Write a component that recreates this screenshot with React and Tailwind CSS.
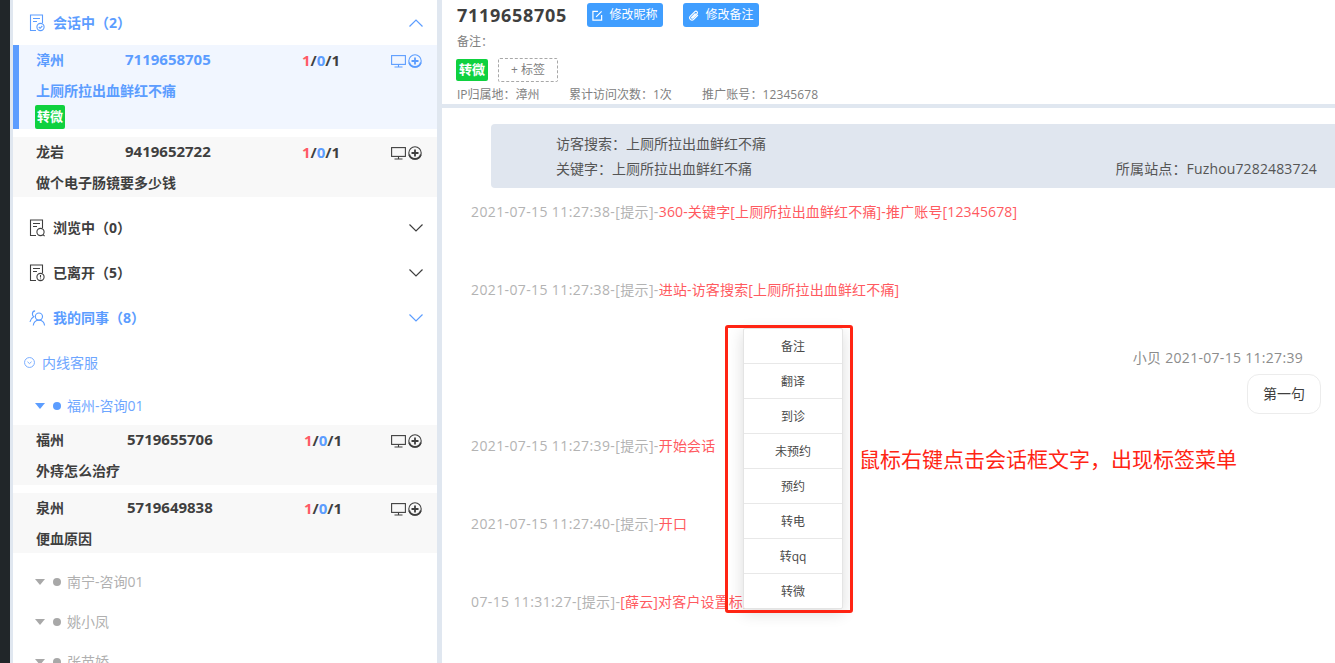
import React from "react";

const FONT = "font-['Open_Sans','Noto_Sans_CJK_SC',sans-serif]";

// document outline with a small badge in the corner
const DocIcon = ({ badge, className }) => (
  <svg viewBox="0 0 16 18" fill="none" stroke="currentColor" strokeWidth="1.1" className={`w-4 h-[18px] shrink-0 ${className}`}>
    <path d="M7 16.5H1.5V1h12v8" />
    <path d="M4 4.5h7M4 7.5h4" />
    <circle cx="11.5" cy="13" r="3.6" />
    {badge === "check" && <path d="M9.8 13l1.3 1.3 2.2-2.3" />}
    {badge === "search" && <path d="M14 15.6l1.6 1.6" />}
    {badge === "alert" && <path d="M11.5 11v2.6M11.5 14.4v.9" />}
  </svg>
);

const PeopleIcon = () => (
  <svg viewBox="0 0 18 18" fill="none" stroke="currentColor" strokeWidth="1.2" className="w-[17px] h-[18px] shrink-0">
    <circle cx="10.5" cy="7.5" r="3.8" />
    <path d="M4.5 17c.4-3.6 2.8-5.6 6-5.6s5.6 2 6 5.6" />
    <path d="M6.5 1.5C4.8 1.7 3.6 3 3.6 4.8c0 1.2.5 2.2 1.4 2.8C3 8.6 1.5 10.500 1 13" />
  </svg>
);

const Chevron = ({ up }) => (
  <svg viewBox="0 0 14 8" fill="none" stroke="currentColor" strokeWidth="1.2" className="w-[14px] h-[8px] shrink-0">
    <path d={up ? "M0.5 7.500L7 1l6.500 6.500" : "M0.500 0.500L7 7l6.500-6.500"} />
  </svg>
);

const ScreenIcon = () => (
  <svg viewBox="0 0 15 13" fill="none" stroke="currentColor" strokeWidth="1.1" className="w-[15px] h-[13px]">
    <rect x="0.6" y="0.6" width="13.8" height="8.8" />
    <path d="M7.500 9.500v2.500M3.500 12h8" />
  </svg>
);

const PlusCircleIcon = () => (
  <svg viewBox="0 0 14 14" fill="none" stroke="currentColor" className="w-[14px] h-[14px]">
    <circle cx="7" cy="7" r="6.2" strokeWidth="1.1" />
    <path d="M1.200 8.500A6 6 0 0012.800 8.500" strokeWidth="1.800" />
    <path d="M7 3.500v7M3.500 7h7" strokeWidth="1.800" />
  </svg>
);

const EditIcon = () => (
  <svg viewBox="0 0 12 12" fill="none" stroke="currentColor" strokeWidth="1.3" className="w-[11px] h-[11px]">
    <path d="M6.500 1.500H1v9.500h9.500V5.500" />
    <path d="M4.500 7.500L10.500 1.500" />
  </svg>
);

const ClipIcon = () => (
  <svg viewBox="0 0 12 12" fill="none" stroke="currentColor" strokeWidth="1.3" className="w-[11px] h-[11px]">
    <path d="M10.800 5.500l-4.600 4.700a2.500 2.500 0 01-3.600-3.600L7.500 1.800a1.600 1.600 0 012.300 2.300L5.200 8.700a.7.7 0 01-1-1l4-4" />
  </svg>
);

const SectionHeader = ({ icon, title, open, active }) => (
  <div className={`h-[45px] flex items-center pl-4 pr-[14px] ${active ? "text-[#5c9dff]" : "text-[#3f3f3f]"}`}>
    <span className="w-[24px] flex">{icon}</span>
    <span className="text-sm font-bold flex-1">{title}</span>
    <Chevron up={open} />
  </div>
);

const VisitorCard = ({ city, id, message, active, tag, wide }) => (
  <div
    className={`${active ? "bg-[#f1f6ff] text-[#5c9dff] border-l-[6px] border-[#5c9dff] pl-[17px]" : "bg-[#f8f8f8] text-[#3f3f3f] pl-[23px]"} pr-[15px] mb-2`}
  >
    <div className="flex items-center h-[30px] font-bold">
      <span className={`text-sm ${wide ? "w-[91px]" : "w-[89px]"}`}>{city}</span>
      <span className="w-[177px] -mt-[2px] text-[15px]">{id}</span>
      <span className="flex-1 text-[15px] text-[#3f3f3f]">
        <span className="text-[#ff5a66]">1</span>/<span className="text-[#5c9dff]">0</span>/1
      </span>
      <span className="flex items-center gap-[2px] mt-[2px]">
        <ScreenIcon />
        <PlusCircleIcon />
      </span>
    </div>
    <div className="h-[30px] pt-[2px] flex items-center text-sm font-bold">{message}</div>
    {tag && (
      <div className="-ml-[1px] h-[24px] flex">
        <span className="flex w-[30px] h-[24px] items-center justify-center bg-[#0fd13f] rounded-[2px] text-white text-[13px] font-bold">
          {tag}
        </span>
      </div>
    )}
  </div>
);

const GroupRow = ({ label, active }) => (
  <div className={`h-[40px] pt-[1px] flex items-center pl-[22px] text-sm ${active ? "text-[#6ea6ff]" : "text-[#b0b0b0]"}`}>
    <span className={`w-0 h-0 border-x-[5px] border-x-transparent border-t-[6px] ${active ? "border-t-[#5c9dff]" : "border-t-[#a8a8a8]"}`} />
    <span className={`w-2 h-2 rounded-full ml-2 mr-[6px] ${active ? "bg-[#5c9dff]" : "bg-[#a8a8a8]"}`} />
    {label}
  </div>
);

const Sidebar = () => (
  <aside className="w-[424px] shrink-0 bg-white overflow-hidden">
    <SectionHeader active open title="会话中（2）" icon={<DocIcon badge="check" />} />
    <VisitorCard active city="漳州" id="7119658705" message="上厕所拉出血鲜红不痛" tag="转微" />
    <VisitorCard city="龙岩" id="9419652722" message="做个电子肠镜要多少钱" />
    <SectionHeader title="浏览中（0）" icon={<DocIcon badge="search" />} />
    <SectionHeader title="已离开（5）" icon={<DocIcon badge="alert" />} />
    <SectionHeader active title="我的同事（8）" icon={<PeopleIcon />} />
    <div className="h-[45px] flex items-center pl-[11px] text-sm text-[#6ea6ff]">
      <svg viewBox="0 0 12 12" fill="none" stroke="currentColor" className="w-[11px] h-[11px] mr-[7px]">
        <circle cx="6" cy="6" r="5.400" />
        <path d="M3.800 5.200L6 7.200l2.200-2" />
      </svg>
      内线客服
    </div>
    <GroupRow active label="福州-咨询01" />
    <VisitorCard wide city="福州" id="5719655706" message="外痔怎么治疗" />
    <VisitorCard wide city="泉州" id="5719649838" message="便血原因" />
    <GroupRow label="南宁-咨询01" />
    <GroupRow label="姚小凤" />
    <GroupRow label="张苗娇" />
  </aside>
);

const ActionButton = ({ icon, label }) => (
  <button className="h-[24px] w-[76px] flex items-center justify-center gap-[6px] bg-[#409eff] rounded-[3px] text-white text-xs">
    {icon}
    {label}
  </button>
);

const LogLine = ({ time, text, className }) => (
  <div className={`h-[24px] leading-[24px] pl-[29px] text-sm whitespace-nowrap text-[#b3b3b3] ${className}`}>
    <span className="tracking-[0.38px]">{time}-[提示]-</span>
    <span className="tracking-[0.15px] text-[#ff5a5f]">{text}</span>
  </div>
);

const ContextMenu = () => (
  <div className="absolute left-[743px] top-[328px] w-[100px] bg-white border border-[#e4e4e4] rounded-[2px] shadow-[0_4px_16px_rgba(0,0,0,0.14)] divide-y divide-[#e8e8e8]">
    {["备注", "翻译", "到诊", "未预约", "预约", "转电", "转qq", "转微"].map((item) => (
      <div key={item} className="h-[35px] last:h-[34px] pt-[2px] flex items-center justify-center text-xs text-[#4a4a4a]">
        {item}
      </div>
    ))}
  </div>
);

export default function App() {
  return (
    <div className={`relative h-screen overflow-hidden flex bg-[#e0e7f0] ${FONT}`}>
      <div className="w-[10px] shrink-0 bg-[#212629]" />
      <div className="w-[3px] shrink-0" />
      <Sidebar />
      <main className="ml-[5px] flex-1 min-w-0 flex flex-col">
        <header className="h-[104px] bg-white pl-[15px] text-xs text-[#808080]">
          <div className="flex items-center h-[34px] pb-[4px]">
            <h1 className="w-[130px] text-lg font-bold tracking-[0.7px] text-[#3f3f3f]">7119658705</h1>
            <div className="flex gap-5">
              <ActionButton icon={<EditIcon />} label="修改昵称" />
              <ActionButton icon={<ClipIcon />} label="修改备注" />
            </div>
          </div>
          <div className="h-[16px] leading-[16px]">备注：</div>
          <div className="flex items-center gap-[10px] mt-[8px] h-[24px] -ml-[1px]">
            <span className="w-[32px] h-[22px] flex items-center justify-center bg-[#0fd13f] rounded-[2px] text-[13px] text-white font-bold">转微</span>
            <span className="w-[60px] h-[24px] flex items-center justify-center border border-dashed border-[#a8a8a8] rounded-[2px]">+ 标签</span>
          </div>
          <div className="flex mt-[4px] h-[18px] items-center">
            <span className="w-[112px]">IP归属地：漳州</span>
            <span className="w-[133px]">累计访问次数：1次</span>
            <span className="tracking-[0.1px]">推广账号：12345678</span>
          </div>
        </header>
        <div className="h-[4px]" />
        <section className="flex-1 bg-white pt-[16px] relative overflow-hidden">
          <div className="ml-[49px] h-[64px] bg-[#e0e6ef] rounded-l-[4px] pl-[65px] pr-[18px] pt-[8px] text-sm text-[#555]">
            <div className="h-[24px] leading-[24px]">访客搜索：上厕所拉出血鲜红不痛</div>
            <div className="h-[26px] leading-[26px] flex justify-between">
              <span>关键字：上厕所拉出血鲜红不痛</span>
              <span className="tracking-[0.15px]">所属站点：Fuzhou7282483724</span>
            </div>
          </div>
          <LogLine className="mt-[12px]" time="2021-07-15 11:27:38" text="360-关键字[上厕所拉出血鲜红不痛]-推广账号[12345678]" />
          <LogLine className="mt-[54px]" time="2021-07-15 11:27:38" text="进站-访客搜索[上厕所拉出血鲜红不痛]" />
          <div className="mt-[46px] h-[66px] flex flex-col items-end pr-[14px]">
            <div className="h-[20px] leading-[20px] mr-[18px] text-sm tracking-[0.3px] text-[#8c8c8c]">小贝 2021-07-15 11:27:39</div>
            <div className="mt-[6px] w-[74px] h-[40px] flex items-center justify-center border border-[#ececec] rounded-[12px] text-sm text-[#3f3f3f]">第一句</div>
          </div>
          <LogLine className="mt-[20px]" time="2021-07-15 11:27:39" text="开始会话" />
          <LogLine className="mt-[54px]" time="2021-07-15 11:27:40" text="开口" />
          <LogLine className="mt-[54px]" time="07-15 11:31:27" text="[薛云]对客户设置标签" />
        </section>
      </main>
      <ContextMenu />
      <div className="absolute left-[725px] top-[325px] w-[128px] h-[288px] border-[3px] border-[#ff2413] rounded-[3px]" />
      <div className="absolute left-[859px] top-[444px] text-[21px] leading-[30px] text-[#ff2413] whitespace-nowrap">
        鼠标右键点击会话框文字，出现标签菜单
      </div>
    </div>
  );
}
